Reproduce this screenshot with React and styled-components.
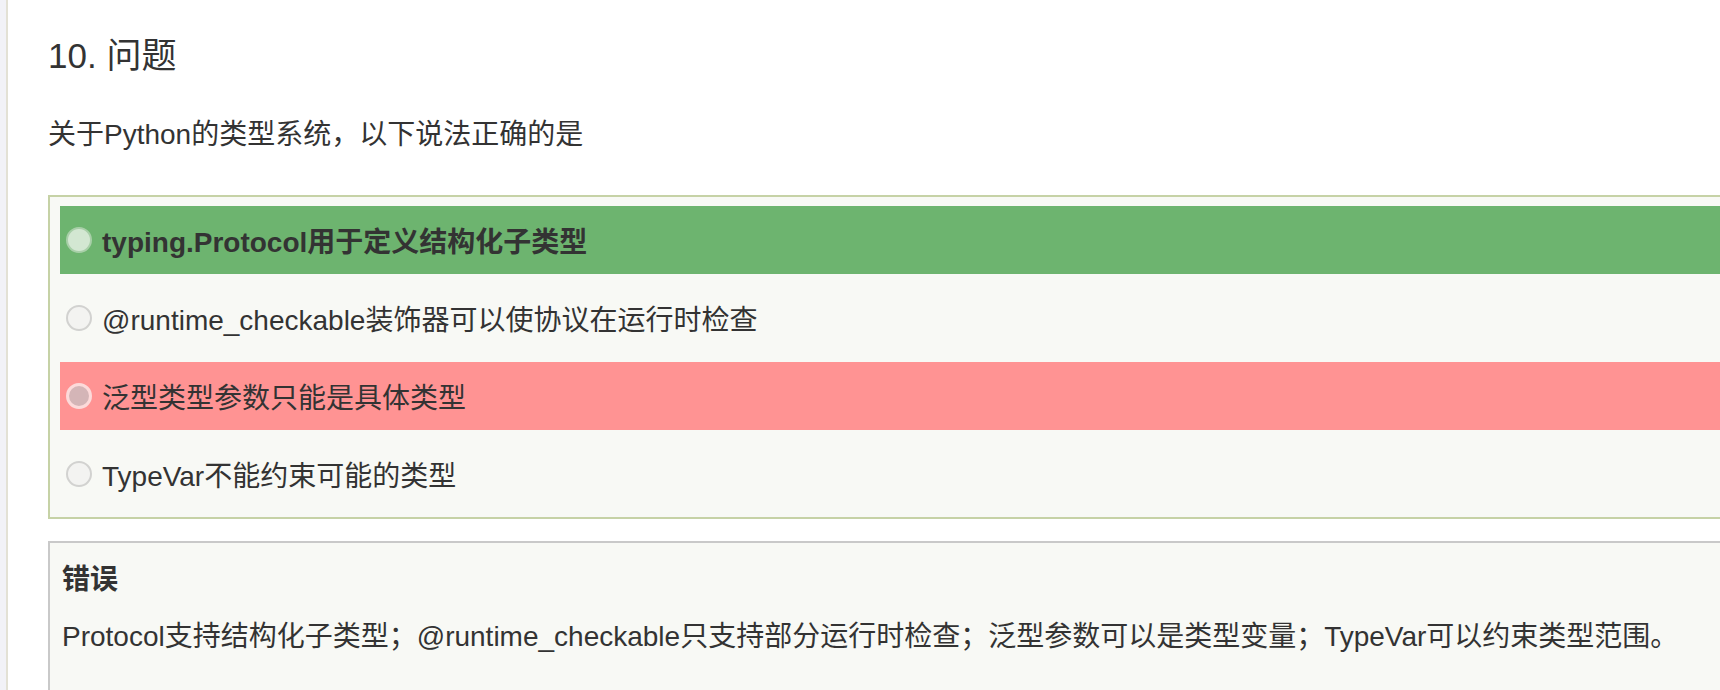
import React from "react";
import styled, { createGlobalStyle } from "styled-components";

const GlobalStyle = createGlobalStyle`
  html, body {
    margin: 0;
    padding: 0;
    background: #ffffff;
    overflow: hidden;
  }
  body {
    font-family: "Liberation Sans", "Noto Sans CJK SC", sans-serif;
    color: #333333;
  }
`;

const Page = styled.div`
  display: flex;
  height: 690px;
  overflow: hidden;
`;

const SideStrip = styled.div`
  flex: 0 0 6px;
  background: #f2f2f7;
  border-right: 2px solid #e3e1d5;
`;

const Content = styled.div`
  flex: 0 0 auto;
  width: 1800px;
  padding: 36px 0 0 40px;
`;

const Heading = styled.h2`
  margin: 0;
  font-size: 35px;
  line-height: 40px;
  font-weight: 400;
  color: #333;
`;

const Question = styled.p`
  margin: 39px 0 40px;
  font-size: 28px;
  line-height: 40px;
`;

const Options = styled.div`
  display: flex;
  flex-direction: column;
  gap: 10px;
  padding: 9px 10px;
  border: 2px solid #c6d2a6;
  background: #f8f9f5;
`;

const rowColors = {
  correct: "#6db46f",
  wrong: "#ff9393",
  none: "transparent",
};

const Row = styled.label`
  display: flex;
  align-items: center;
  height: 68px;
  padding-left: 6px;
  background: ${(p) => rowColors[p.$state]};
  font-size: 28px;
  font-weight: ${(p) => (p.$state === "correct" ? 700 : 400)};
`;

const radioLook = {
  correct: "background: #d3e7d2; border: 2px solid #a8cfa8;",
  wrong: "background: #d4b5b7; border: 3px solid #fcdada;",
  none: "background: #f3f3f1; border: 2px solid #d2d2d0;",
};

const Radio = styled.span`
  box-sizing: border-box;
  flex: 0 0 26px;
  width: 26px;
  height: 26px;
  border-radius: 50%;
  margin-right: 10px;
  ${(p) => radioLook[p.$state]}
`;

const Explain = styled.div`
  margin-top: 22px;
  padding: 17px 12px 40px;
  border: 2px solid #c9c9c9;
  border-right: none;
  background: #f8f9f5;
`;

const Verdict = styled.div`
  font-size: 28px;
  line-height: 40px;
  font-weight: 700;
`;

const Reason = styled.div`
  margin-top: 17px;
  font-size: 28px;
  line-height: 40px;
`;

const options = [
  { text: "typing.Protocol用于定义结构化子类型", state: "correct" },
  { text: "@runtime_checkable装饰器可以使协议在运行时检查", state: "none" },
  { text: "泛型类型参数只能是具体类型", state: "wrong" },
  { text: "TypeVar不能约束可能的类型", state: "none" },
];

export default function App() {
  return (
    <>
      <GlobalStyle />
      <Page>
        <SideStrip />
        <Content>
          <Heading>10. 问题</Heading>
          <Question>关于Python的类型系统，以下说法正确的是</Question>
          <Options>
            {options.map((o) => (
              <Row key={o.text} $state={o.state}>
                <Radio $state={o.state} />
                {o.text}
              </Row>
            ))}
          </Options>
          <Explain>
            <Verdict>错误</Verdict>
            <Reason>
              Protocol支持结构化子类型；@runtime_checkable只支持部分运行时检查；泛型参数可以是类型变量；TypeVar可以约束类型范围。
            </Reason>
          </Explain>
        </Content>
      </Page>
    </>
  );
}
